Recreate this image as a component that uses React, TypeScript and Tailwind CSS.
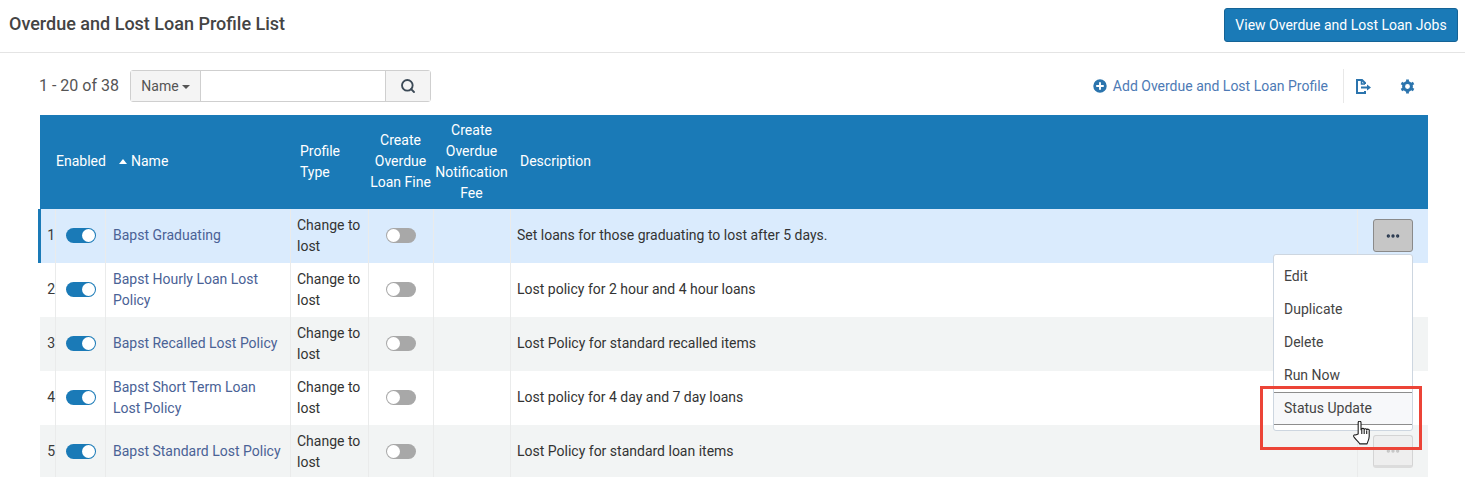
import { CirclePlus, Ellipsis, Search } from "lucide-react";

const rows = [
  { name: "Bapst Graduating", desc: "Set loans for those graduating to lost after 5 days.", wraps: false },
  { name: "Bapst Hourly Loan Lost Policy", desc: "Lost policy for 2 hour and 4 hour loans", wraps: true },
  { name: "Bapst Recalled Lost Policy", desc: "Lost Policy for standard recalled items", wraps: false },
  { name: "Bapst Short Term Loan Lost Policy", desc: "Lost policy for 4 day and 7 day loans", wraps: true },
  { name: "Bapst Standard Lost Policy", desc: "Lost Policy for standard loan items", wraps: false },
];

const headCols = "grid grid-cols-[15px_50px_185px_78px_65px_77px_848px_70px]";
const rowCols = "grid grid-cols-[16px_50px_185px_78px_65px_77px_847px_70px]";

function Toggle({ on }: { on: boolean }) {
  return (
    <div className={`flex h-[15px] w-[30px] items-center rounded-full px-[1px] ${on ? "justify-end bg-[#1a7ab7]" : "justify-start bg-[#a8a8a8]"}`}>
      <div className="h-[13px] w-[13px] rounded-full bg-white" />
    </div>
  );
}

function ExportIcon() {
  return (
    <svg width="17" height="15" viewBox="0 0 17 15" fill="none" stroke="#2b74ad" strokeWidth="2">
      <path d="M10 5V4L7 1H2v13h8v-2" />
      <path d="M6.500 1v4H10" strokeWidth="1.500" />
      <path d="M6 8.500h8" />
      <path d="M12 5.500l4 3-4 3z" fill="#2b74ad" stroke="none" />
    </svg>
  );
}

function GearIcon() {
  return (
    <svg width="15" height="15" viewBox="0 0 16 16" fill="none" stroke="#2b74ad">
      <circle cx="8" cy="8" r="4.200" strokeWidth="3.200" />
      <path
        d="M8 0.500v3M8 12.500v3M1.500 4.250l2.600 1.500M11.900 10.250l2.600 1.500M1.500 11.750l2.600-1.500M11.900 5.750l2.600-1.500"
        strokeWidth="3"
      />
    </svg>
  );
}

function HandCursor() {
  return (
    <svg width="18" height="24" viewBox="0.500 1 16 22" fill="#fff" stroke="#1c1c1c" strokeWidth="1" strokeLinejoin="round">
      <path d="M5 13V2.500a1.300 1.300 0 0 1 2.600 0V9l0.600-0.500 0 0a1.200 1.200 0 0 1 2.300 0.300 1.200 1.200 0 0 1 2.300 0.500 1.200 1.200 0 0 1 2.300 0.700V15c0 3-1.500 5-2 7H6.500C5.500 20 2 17.500 1 15.500c-0.500-1.200 0.500-2.200 1.600-1.700z" />
      <path d="M8.300 9v4M10.500 9v4M12.800 10v3" fill="none" />
    </svg>
  );
}

function Row({ i, name, desc, wraps }: { i: number; name: string; desc: string; wraps: boolean }) {
  const bg = i === 0 ? "bg-[#daebfd]" : i % 2 === 0 ? "bg-[#f2f4f4]" : "bg-white";
  const cell = "flex items-center border-r border-[#eaebeb]";
  return (
    <div className={`${rowCols} h-[54px] text-[14px] leading-[21px] ${bg}`}>
      <div className={`${cell} justify-end pb-[1px] text-[#3a3a3a] ${i === 0 ? "relative" : ""}`}>
        {i === 0 && <div className="absolute bottom-0 left-[-2px] top-0 w-[3px] bg-[#1a7ab7]" />}
        {i + 1}
      </div>
      <div className={`${cell} justify-center pb-[1px]`}>
        <Toggle on />
      </div>
      <div className={`${cell} pl-[7px] pr-[4px] text-[#4a6296] ${wraps ? "" : "pb-[1px]"}`}>{name}</div>
      <div className={`${cell} pl-[6px] text-[#333]`}>
        <span className="w-[70px]">Change to lost</span>
      </div>
      <div className={`${cell} justify-center pb-[1px]`}>
        <Toggle on={false} />
      </div>
      <div className={cell} />
      <div className={`${cell} pb-[1px] pl-[6px] text-[#333]`}>{desc}</div>
      <div className="flex items-start pl-[15px] pt-[10px]">
        <div className={`flex h-[33px] w-[40px] items-center justify-center rounded-[3px] border ${i === 0 ? "border-[#8a8a8a] bg-[#c6c6c6]" : "border-[#d4d4d4] border-b-[3px] border-b-[#dcdcdc] bg-[#eeeeee]"}`}>
          <Ellipsis size={16} strokeWidth={3} className={i === 0 ? "text-[#26364d]" : "text-[#c4c4c4]"} />
        </div>
      </div>
    </div>
  );
}

export default function App() {
  return (
    <div className="relative h-[477px] w-[1465px] overflow-hidden bg-white font-['Roboto',sans-serif] text-[14px] text-[#3a3a3a]">
      <div className="flex h-[53px] items-center justify-between border-b border-[#e4e4e4] pb-[2px] pl-[9px] pr-[7px]">
        <h1 className="mb-[4px] text-[18px] font-medium text-[#444]">Overdue and Lost Loan Profile List</h1>
        <button className="h-[34px] w-[234px] rounded-[3px] border border-[#156396] bg-[#1a7ab7] text-[14px] text-white">
          View Overdue and Lost Loan Jobs
        </button>
      </div>

      <div className="flex h-[62px] items-center justify-between pl-[39px] pr-[50px] pt-[4px]">
        <div className="flex items-center gap-[11px]">
          <span className="text-[16px] text-[#555]">1 - 20 of 38</span>
          <div className="flex h-[32px] w-[301px] rounded-[3px] border border-[#cfcfcf]">
            <div className="flex w-[70px] items-center justify-center gap-[3px] border-r border-[#cfcfcf] bg-[#f4f4f4] text-[#555]">
              Name
              <span className="mt-[1px] h-0 w-0 border-x-[4px] border-t-[4px] border-x-transparent border-t-[#555]" />
            </div>
            <div className="flex-1 bg-white" />
            <div className="flex w-[45px] items-center justify-center border-l border-[#cfcfcf] bg-[#f4f4f4]">
              <Search size={16} strokeWidth={2.800} className="text-[#3c4a57]" />
            </div>
          </div>
        </div>
        <div className="flex items-center">
          <div className="flex items-center gap-[5px] pr-[15px] text-[#4d7ab5]">
            <CirclePlus size={16} fill="#2b74ad" stroke="#fff" strokeWidth={2.500} className="scale-[1.150]" />
            <span>Add Overdue and Lost Loan Profile</span>
          </div>
          <div className="flex h-[34px] items-center gap-[28px] border-l border-[#e8e8e8] pl-[11px]">
            <ExportIcon />
            <GearIcon />
          </div>
        </div>
      </div>

      <div className="ml-[40px] w-[1388px]">
        <div className={`${headCols} h-[94px] items-center bg-[#1a7ab7] text-[14px] leading-[21px] text-white`}>
          <div className="col-span-2 pb-[2px] pl-[16px]">Enabled</div>
          <div className="flex items-center gap-[4px] pb-[2px] pl-[14px]">
            <span className="h-0 w-0 border-x-[4px] border-b-[5px] border-x-transparent border-b-white" />
            Name
          </div>
          <div className="pl-[10px]">
            Profile
            <br />
            Type
          </div>
          <div className="pb-[2px] text-center">
            Create
            <br />
            Overdue
            <br />
            <span className="whitespace-nowrap">Loan Fine</span>
          </div>
          <div className="text-center">
            Create
            <br />
            Overdue
            <br />
            Notification
            <br />
            Fee
          </div>
          <div className="pb-[2px] pl-[10px]">Description</div>
          <div />
        </div>
        {rows.map((r, i) => (
          <Row key={r.name} i={i} name={r.name} desc={r.desc} wraps={r.wraps} />
        ))}
      </div>

      <div className="absolute left-[1273px] top-[254px] h-[177px] w-[140px] rounded-[3px] border border-[#cdd6e0] bg-white pt-[5px] text-[14px] text-[#444]">
        {["Edit", "Duplicate", "Delete", "Run Now"].map((m) => (
          <div key={m} className="flex h-[33px] items-center pl-[10px]">
            {m}
          </div>
        ))}
        <div className="flex h-[33px] items-center border-y border-[#8d8d8d] bg-[#f7f8fa] pl-[10px]">Status Update</div>
      </div>

      <div className="absolute left-[1260px] top-[386px] h-[64px] w-[162px] border-[3px] border-[#ec4437]" />
      <div className="absolute left-[1353px] top-[421px]">
        <HandCursor />
      </div>
    </div>
  );
}
